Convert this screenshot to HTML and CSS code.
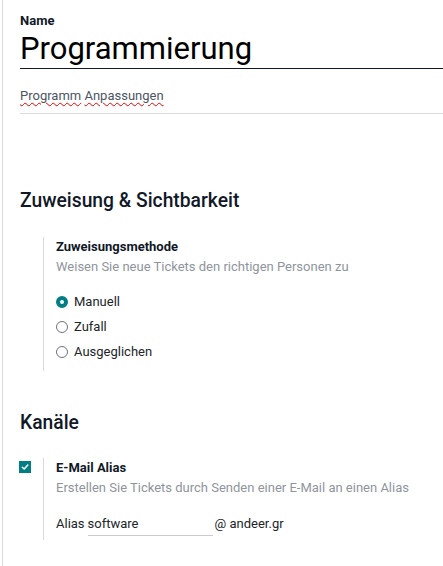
FILE: index.html
```html
<!DOCTYPE html>
<html lang="de">
<head>
<meta charset="utf-8">
<link rel="stylesheet" href="styles.css">
</head>
<body>
<div class="sheet">
  <div class="title-block">
    <div class="label">Name</div>
    <div class="name-field">Programmierung</div>
    <div class="desc-field"><span class="spell">Programm</span> <span class="spell">Anpassungen</span></div>
  </div>

  <h2 class="section-title first">Zuweisung &amp; Sichtbarkeit</h2>
  <div class="setting setting-assign">
    <div class="setting-left"></div>
    <div class="setting-right">
      <div class="setting-label">Zuweisungsmethode</div>
      <div class="setting-help">Weisen Sie neue Tickets den richtigen Personen zu</div>
      <div class="radios">
        <div class="radio-row"><span class="radio checked"></span><span>Manuell</span></div>
        <div class="radio-row"><span class="radio"></span><span>Zufall</span></div>
        <div class="radio-row"><span class="radio"></span><span>Ausgeglichen</span></div>
      </div>
    </div>
  </div>

  <h2 class="section-title second">Kanäle</h2>
  <div class="setting setting-channels">
    <div class="setting-left">
      <span class="checkbox">
        <svg width="8" height="8" viewBox="0 0 8 8"><path d="M1.3 4.2 L3.2 6 L6.8 2" fill="none" stroke="#fff" stroke-width="1.5" stroke-linecap="round" stroke-linejoin="round"/></svg>
      </span>
    </div>
    <div class="setting-right">
      <div class="setting-label">E-Mail Alias</div>
      <div class="setting-help">Erstellen Sie Tickets durch Senden einer E-Mail an einen Alias</div>
      <div class="alias-row">
        <span class="alias-label">Alias</span>
        <span class="alias-input">software</span>
        <span class="alias-domain">@ andeer.gr</span>
      </div>
    </div>
  </div>
</div>
</body>
</html>
```

FILE: styles.css
```css
html, body {
  margin: 0;
  padding: 0;
  background: #fff;
}
body {
  font-family: Roboto, "Noto Sans", sans-serif;
  font-size: 13px;
  color: #212529;
  width: 443px;
  height: 566px;
  overflow: hidden;
}
.sheet {
  margin-left: 2px;
  border-left: 1px solid #d8dadd;
  padding: 13px 0 0 17px;
  height: 566px;
  box-sizing: border-box;
}
.label {
  font-weight: 700;
  color: #111827;
  font-size: 13px;
  line-height: 16px;
}
.name-field {
  font-size: 31px;
  line-height: 38px;
  color: #000;
  border-bottom: 1px solid #111827;
  padding-top: 1px;
  height: 40px;
  box-sizing: border-box;
}
.desc-field {
  color: #4b5563;
  margin-top: 17px;
  line-height: 20px;
  padding-bottom: 7px;
  border-bottom: 1px solid #d8dadd;
}
.spell {
  text-decoration: underline wavy #e00;
  text-decoration-thickness: 1px;
  text-underline-offset: 2px;
}
.section-title {
  font-size: 19.3px;
  font-weight: 500;
  color: #111827;
  margin: 0;
  line-height: 24px;
}
.section-title.first {
  margin-top: 75px;
}
.section-title.second {
  margin-top: 40px;
}
.setting {
  display: flex;
}
.setting-assign {
  margin-top: 24px;
}
.setting-channels {
  margin-top: 23px;
}
.setting-left {
  width: 23px;
  flex: none;
  display: flex;
  align-items: flex-start;
}
.setting-right {
  border-left: 1px solid #d8dadd;
  padding-left: 12px;
}
.setting-assign .setting-right {
  padding-bottom: 7px;
}
.setting-label {
  font-weight: 700;
  color: #111827;
  line-height: 20px;
}
.setting-help {
  color: #8f959d;
  line-height: 20px;
}
.radios {
  margin-top: 12px;
}
.radio-row {
  display: flex;
  align-items: center;
  height: 25px;
  color: #212529;
}
.radio {
  width: 12px;
  height: 12px;
  border-radius: 50%;
  border: 1px solid #6c757d;
  box-sizing: border-box;
  margin-right: 6px;
  background: #fff;
  flex: none;
}
.radio.checked {
  border: 4px solid #017e84;
  background: #fff;
}
.checkbox {
  display: flex;
  align-items: center;
  justify-content: center;
  width: 12px;
  height: 12px;
  background: #017e84;
  margin-top: 3px;
  margin-left: -1px;
}
.alias-row {
  display: flex;
  align-items: flex-start;
  margin-top: 16px;
  padding-bottom: 4px;
  line-height: 20px;
  color: #212529;
}
.alias-label {
  margin-right: 3px;
}
.alias-input {
  width: 125px;
  border-bottom: 1px solid #c8ccd0;
  padding-bottom: 1px;
}
.alias-domain {
  margin-left: 2px;
}
```
